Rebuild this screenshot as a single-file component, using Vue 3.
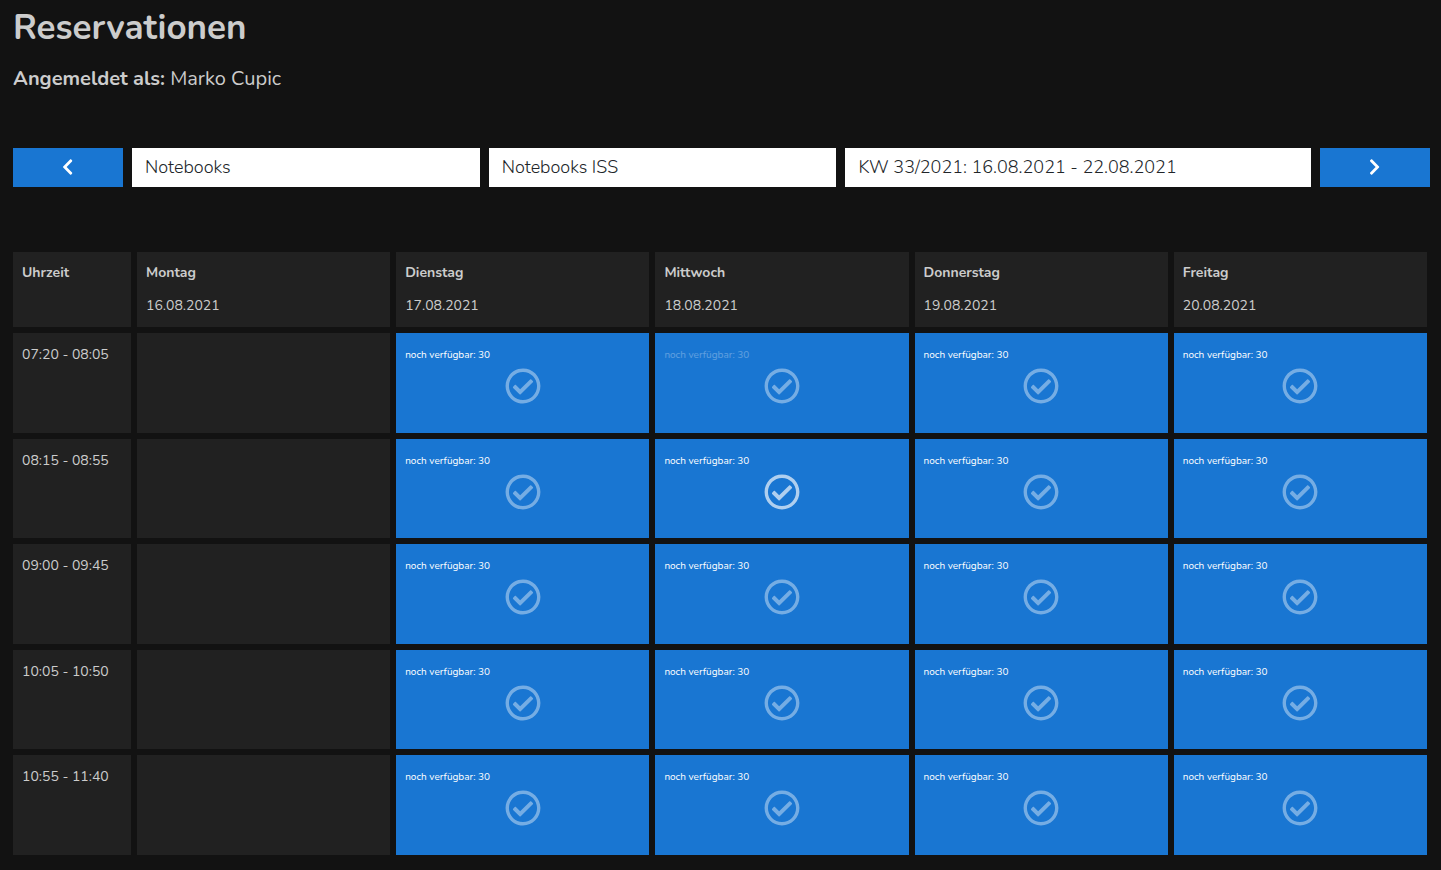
<script setup>
import { ref } from 'vue'

const category = ref('Notebooks')
const resource = ref('Notebooks ISS')
const week = ref('KW 33/2021: 16.08.2021 - 22.08.2021')

const days = [
  { name: 'Montag', date: '16.08.2021', open: false },
  { name: 'Dienstag', date: '17.08.2021', open: true },
  { name: 'Mittwoch', date: '18.08.2021', open: true },
  { name: 'Donnerstag', date: '19.08.2021', open: true },
  { name: 'Freitag', date: '20.08.2021', open: true },
]
const slots = ['07:20 - 08:05', '08:15 - 08:55', '09:00 - 09:45', '10:05 - 10:50', '10:55 - 11:40']

const active = ref('08:15 - 08:55 Mittwoch')
const fading = ref('07:20 - 08:05 Mittwoch')
const key = (slot, day) => `${slot} ${day.name}`
</script>

<template>
  <main class="page">
    <h1 class="title">Reservationen</h1>
    <p class="user"><strong>Angemeldet als:</strong> Marko Cupic</p>

    <form class="filters" @submit.prevent>
      <button class="nav" type="button" aria-label="Vorherige Woche">
        <svg class="chevron" viewBox="0 0 320 512" aria-hidden="true">
          <path d="M34.52 239.03L228.87 44.69c9.37-9.37 24.57-9.37 33.94 0l22.67 22.67c9.36 9.36 9.37 24.52.04 33.9L131.49 256l154.02 154.75c9.34 9.38 9.32 24.54-.04 33.9l-22.67 22.67c-9.37 9.37-24.57 9.37-33.94 0L34.52 272.97c-9.37-9.37-9.37-24.57 0-33.94z" />
        </svg>
      </button>
      <select v-model="category" class="field" aria-label="Kategorie">
        <option>Notebooks</option>
      </select>
      <select v-model="resource" class="field" aria-label="Ressource">
        <option>Notebooks ISS</option>
      </select>
      <select v-model="week" class="field" aria-label="Woche">
        <option>KW 33/2021: 16.08.2021 - 22.08.2021</option>
      </select>
      <button class="nav" type="button" aria-label="Nächste Woche">
        <svg class="chevron" viewBox="0 0 320 512" aria-hidden="true">
          <path d="M285.476 272.971L91.132 467.314c-9.373 9.373-24.569 9.373-33.941 0l-22.667-22.667c-9.357-9.357-9.375-24.522-.04-33.901L188.505 256 34.484 101.255c-9.335-9.379-9.317-24.544.04-33.901l22.667-22.667c9.373-9.373 24.569-9.373 33.941 0L285.475 239.03c9.373 9.372 9.373 24.568.001 33.941z" />
        </svg>
      </button>
    </form>

    <div class="schedule">
      <table class="grid">
        <thead>
          <tr>
            <th class="time-col" scope="col"><p class="day">Uhrzeit</p></th>
            <th v-for="day in days" :key="day.name" scope="col">
              <p class="day">{{ day.name }}</p>
              <p class="date">{{ day.date }}</p>
            </th>
          </tr>
        </thead>
        <tbody>
          <tr v-for="slot in slots" :key="slot">
            <th class="time" scope="row">{{ slot }}</th>
            <td v-for="day in days" :key="day.name" :class="{ open: day.open }">
              <button
                v-if="day.open"
                type="button"
                class="slot"
                :class="{ active: active === key(slot, day), fading: fading === key(slot, day) }"
                @click="active = key(slot, day)"
              >
                <span class="stock">noch verfügbar: 30</span>
                <svg class="check" viewBox="0 0 512 512" aria-hidden="true">
                  <path d="M256 8C119.033 8 8 119.033 8 256s111.033 248 248 248 248-111.033 248-248S392.967 8 256 8zm0 48c110.532 0 200 89.451 200 200 0 110.532-89.451 200-200 200-110.532 0-200-89.451-200-200 0-110.532 89.451-200 200-200m140.204 130.267l-22.536-22.718c-4.667-4.705-12.265-4.736-16.97-.068L215.346 303.697l-59.792-60.277c-4.667-4.705-12.265-4.736-16.97-.069l-22.719 22.536c-4.705 4.667-4.736 12.265-.068 16.971l90.781 91.516c4.667 4.705 12.265 4.736 16.97.068l172.589-171.204c4.704-4.668 4.734-12.266.067-16.971z" />
                </svg>
              </button>
            </td>
          </tr>
        </tbody>
      </table>
    </div>
  </main>
</template>

<style>
body {
  margin: 0;
  background: #121212;
}
</style>

<style scoped>
.page {
  padding: 7px 11px 8px 13px;
  color: #ccc;
  font-family: Nunito, Lato, sans-serif;
}
.title {
  margin: 0;
  font-size: 35px;
  line-height: 42px;
  font-weight: 700;
}
.user {
  margin: 16px 0 55px;
  font-size: 20px;
  line-height: 28px;
}
.filters {
  display: grid;
  grid-template-columns: 110px 348fr 348fr 466fr 110px;
  gap: 9px;
}
.nav {
  display: flex;
  align-items: center;
  justify-content: center;
  height: 39px;
  padding: 0 0 1px;
  border: 0;
  background: #1976d2;
  cursor: pointer;
}
.chevron {
  height: 18px;
  fill: #fff;
}
.field {
  appearance: none;
  min-width: 0;
  height: 39px;
  padding: 0 13px 2px;
  border: 0;
  border-radius: 0;
  background: #fff;
  color: #212529;
  font-family: inherit;
  font-size: 18px;
  font-weight: 300;
}
.schedule {
  margin: 59px -3px 0 -6px;
}
.grid {
  width: 100%;
  table-layout: fixed;
  border-collapse: separate;
  border-spacing: 6px;
  font-size: 14px;
  line-height: 21px;
}
.time-col {
  width: 118px;
}
th,
td {
  box-sizing: border-box;
  background: #212121;
  text-align: left;
  vertical-align: top;
}
th {
  padding: 10px 9px;
}
thead th {
  height: 75px;
}
tbody th,
tbody td {
  height: 100px;
}
tbody tr:nth-child(even) > * {
  height: 99px;
}
td {
  padding: 0;
}
td.open {
  background: #1976d2;
}
.day,
.date {
  margin: 0;
}
.date {
  margin-top: 12px;
  font-weight: 400;
}
.time {
  padding-top: 11px;
  font-weight: 400;
}
.slot {
  display: flex;
  flex-direction: column;
  align-items: center;
  width: 100%;
  padding: 15px 9px;
  border: 0;
  background: none;
  color: #fff;
  font-family: inherit;
  font-size: 10px;
  line-height: 15px;
  cursor: pointer;
}
.stock {
  align-self: flex-start;
}
.check {
  width: 36px;
  height: 36px;
  margin-top: 5px;
  fill: #fff;
  opacity: 0.4;
}
.active .check {
  opacity: 0.65;
}
.fading .stock {
  opacity: 0.3;
}
</style>
